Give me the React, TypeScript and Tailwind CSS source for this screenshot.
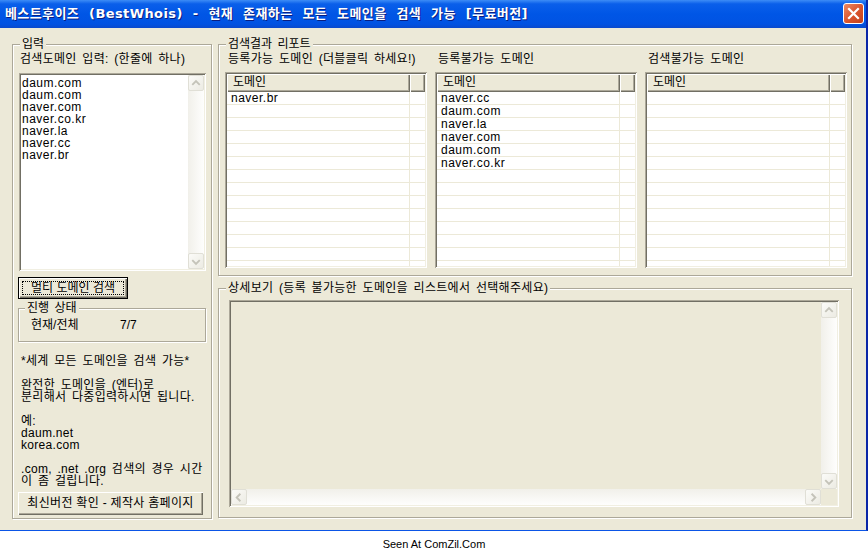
const ui =
  "[font-family:'Liberation_Sans','Noto_Sans_CJK_KR',sans-serif] text-[12px] text-black [word-spacing:2px]";

// classic 3D edges
const sunken =
  "p-[2px] shadow-[inset_1px_1px_0_#ACA899,inset_-1px_-1px_0_#FFFFFF,inset_2px_2px_0_#716F64,inset_-2px_-2px_0_#F1EFE2]";
const raised =
  "shadow-[inset_1px_1px_0_#FFFFFF,inset_-1px_-1px_0_#716F64,inset_-2px_-2px_0_#ACA899]";
const etched =
  "border border-[#ACA899] shadow-[inset_1px_1px_0_#FFFFFF,1px_1px_0_#FFFFFF]";

const chevrons = {
  up: "M3.5 9 L7.5 5 L11.5 9",
  down: "M3.5 6 L7.5 10 L11.5 6",
  left: "M9 3.5 L5 7.5 L9 11.5",
  right: "M6 3.5 L10 7.5 L6 11.5",
};

function ArrowBtn({ dir }: { dir: keyof typeof chevrons }) {
  return (
    <div className="w-[16px] h-[16px] shrink-0 rounded-[2px] border border-[#E0DFD6] bg-[linear-gradient(135deg,#FBFBF8,#ECEBE3)] flex items-center justify-center">
      <svg width="15" height="15" viewBox="0 0 15 15">
        <path d={chevrons[dir]} fill="none" stroke="#C4C3B9" strokeWidth="2" />
      </svg>
    </div>
  );
}

function VScroll() {
  return (
    <div className="w-[16px] h-full shrink-0 flex flex-col justify-between bg-[linear-gradient(to_right,#F1F0EA,#FEFEFD)]">
      <ArrowBtn dir="up" />
      <ArrowBtn dir="down" />
    </div>
  );
}

function HScroll() {
  return (
    <div className="flex-1 h-[16px] flex justify-between bg-[linear-gradient(to_bottom,#F1F0EA,#FEFEFD)]">
      <ArrowBtn dir="left" />
      <ArrowBtn dir="right" />
    </div>
  );
}

function DomainList({ items }: { items: string[] }) {
  const rows = Array.from({ length: 14 }, (_, i) => items[i] ?? "");
  return (
    <div className={`w-[202px] h-[196px] bg-white overflow-hidden ${sunken}`}>
      <div className="h-full flex flex-col overflow-hidden">
        <div className="flex h-[18px] shrink-0 bg-[#ECE9D8]">
          <div className={`w-[183px] pl-[6px] leading-[17px] ${raised}`}>도메인</div>
          <div className={`flex-1 ${raised}`} />
        </div>
        {rows.map((r, i) => (
          <div key={i} className="flex h-[13px] shrink-0 border-b border-[#ECE9D8]">
            <div className="w-[183px] pl-[4px] leading-[12px] tracking-[0.5px] border-r border-[#ECE9D8]">{r}</div>
            <div className="flex-1" />
          </div>
        ))}
      </div>
    </div>
  );
}

const inputLines = [
  "daum.com",
  "daum.com",
  "naver.com",
  "naver.co.kr",
  "naver.la",
  "naver.cc",
  "naver.br",
];

const helpLines = [
  "*세계 모든 도메인을 검색 가능*",
  "",
  "완전한 도메인을 (엔터)로",
  "분리해서 다중입력하시면 됩니다.",
  "",
  "예:",
  "daum.net",
  "korea.com",
  "",
  ".com, .net .org 검색의 경우 시간",
  "이 좀 걸립니다.",
];

const columns = [
  { label: "등록가능 도메인 (더블클릭 하세요!)", items: ["naver.br"] },
  {
    label: "등록불가능 도메인",
    items: ["naver.cc", "daum.com", "naver.la", "naver.com", "daum.com", "naver.co.kr"],
  },
  { label: "검색불가능 도메인", items: [] },
];

function LeftPanel() {
  return (
    <fieldset className={`w-[200px] h-[481px] shrink-0 pl-[5px] pr-[5px] ${etched}`}>
      <legend className="ml-[2px] px-[2px] h-[12px] leading-[12px] bg-[#ECE9D8]">입력</legend>
      <div className="h-[23px] pt-[2px] pl-[2px] leading-[14px] whitespace-nowrap tracking-[0.3px]">
        검색도메인 입력: (한줄에 하나)
      </div>
      <div className={`ml-[1px] w-[187px] h-[198px] bg-white flex ${sunken}`}>
        <div className="flex-1 pl-[1px] pt-[2px] leading-[12px] tracking-[0.5px]">
          {inputLines.map((l, i) => (
            <div key={i}>{l}</div>
          ))}
        </div>
        <VScroll />
      </div>

      <button className="mt-[6px] w-[110px] h-[22px] border border-black bg-[#ECE9D8] flex p-0">
        <div className={`flex-1 h-full p-[3px] ${raised}`}>
          <div className="h-full border border-dotted border-black leading-[13px] flex items-center justify-center">
            멀티 도메인 검색
          </div>
        </div>
      </button>

      <fieldset className={`mt-[3px] w-[188px] h-[40px] pl-[4px] ${etched}`}>
        <legend className="ml-[2px] px-[2px] h-[12px] leading-[12px] bg-[#ECE9D8]">진행 상태</legend>
        <div className="flex pl-[8px] pt-[5px] leading-[12px]">
          <div className="w-[89px]">현재/전체</div>
          <div>7/7</div>
        </div>
      </fieldset>

      <div className="mt-[13px] pl-[3px] leading-[12px] whitespace-nowrap tracking-[0.3px]">
        {helpLines.map((l, i) => (
          <div key={i} className="h-[12px]">
            {l}
          </div>
        ))}
      </div>

      <button className={`mt-[5px] w-[185px] h-[23px] bg-[#ECE9D8] leading-[13px] tracking-[0.3px] ${raised}`}>
        최신버전 확인 - 제작사 홈페이지
      </button>
    </fieldset>
  );
}

function RightPanel() {
  return (
    <div className="flex flex-col w-[634px]">
      <fieldset className={`w-[634px] h-[238px] pl-[6px] pr-[4px] ${etched}`}>
        <legend className="ml-[1px] px-[2px] h-[12px] leading-[12px] bg-[#ECE9D8]">검색결과 리포트</legend>
        <div className="flex gap-[8px]">
          {columns.map((c) => (
            <div key={c.label} className="flex flex-col w-[202px]">
              <div className="h-[22px] pt-[2px] pl-[3px] leading-[14px] whitespace-nowrap tracking-[0.3px]">{c.label}</div>
              <DomainList items={c.items} />
            </div>
          ))}
        </div>
      </fieldset>

      <fieldset className={`mt-[6px] w-[634px] h-[236px] pl-[6px] ${etched}`}>
        <legend className="ml-[1px] px-[2px] h-[12px] leading-[12px] bg-[#ECE9D8] whitespace-nowrap tracking-[0.3px]">
          상세보기 (등록 불가능한 도메인을 리스트에서 선택해주세요)
        </legend>
        <div className={`mt-[6px] ml-[4px] w-[610px] h-[207px] bg-[#ECE9D8] ${sunken}`}>
          <div className="h-full flex flex-col">
            <div className="flex flex-1">
              <div className="flex-1" />
              <VScroll />
            </div>
            <div className="flex h-[16px]">
              <HScroll />
              <div className="w-[16px]" />
            </div>
          </div>
        </div>
      </fieldset>
    </div>
  );
}

function TitleBar() {
  return (
    <div className="h-[28px] shrink-0 flex pl-[5px] pr-[2px] bg-[linear-gradient(to_bottom,#3D8CF6_0%,#0A5FEA_14%,#0056E6_50%,#0152E2_86%,#0A49CC_100%)]">
      <div className="flex-1 leading-[28px] text-white font-bold text-[13px] [font-family:'DejaVu_Sans','Noto_Sans_CJK_KR',sans-serif] [word-spacing:5px] tracking-[0.4px] [text-shadow:1px_1px_0_#0A1E80] whitespace-nowrap">
        베스트후이즈 (BestWhois) - 현재 존재하는 모든 도메인을 검색 가능 [무료버전]
      </div>
      <div className="mt-[3px] w-[21px] h-[21px] rounded-[3px] border border-white bg-[linear-gradient(135deg,#EE8A63,#D9532C_55%,#C2401C)] flex items-center justify-center">
        <svg width="13" height="13" viewBox="0 0 13 13">
          <path d="M2 2 L11 11 M11 2 L2 11" stroke="#FFFFFF" strokeWidth="2.2" strokeLinecap="square" />
        </svg>
      </div>
    </div>
  );
}

export default function App() {
  return (
    <div className={`w-[868px] h-[560px] bg-white overflow-hidden ${ui}`}>
      <div className="w-[868px] h-[531px] flex flex-col bg-[#ECE9D8] border-r-2 border-r-[#0A26A8] border-b border-b-[#0B55E6]">
        <TitleBar />
        <div className="flex flex-1 pl-[12px] pt-[10px] gap-[6px]">
          <LeftPanel />
          <RightPanel />
        </div>
      </div>
      <div className="h-[29px] flex justify-center pt-[6px] leading-[14px] text-[11px] [word-spacing:0px] [font-family:'Liberation_Sans',sans-serif]">
        Seen At ComZil.Com
      </div>
    </div>
  );
}
